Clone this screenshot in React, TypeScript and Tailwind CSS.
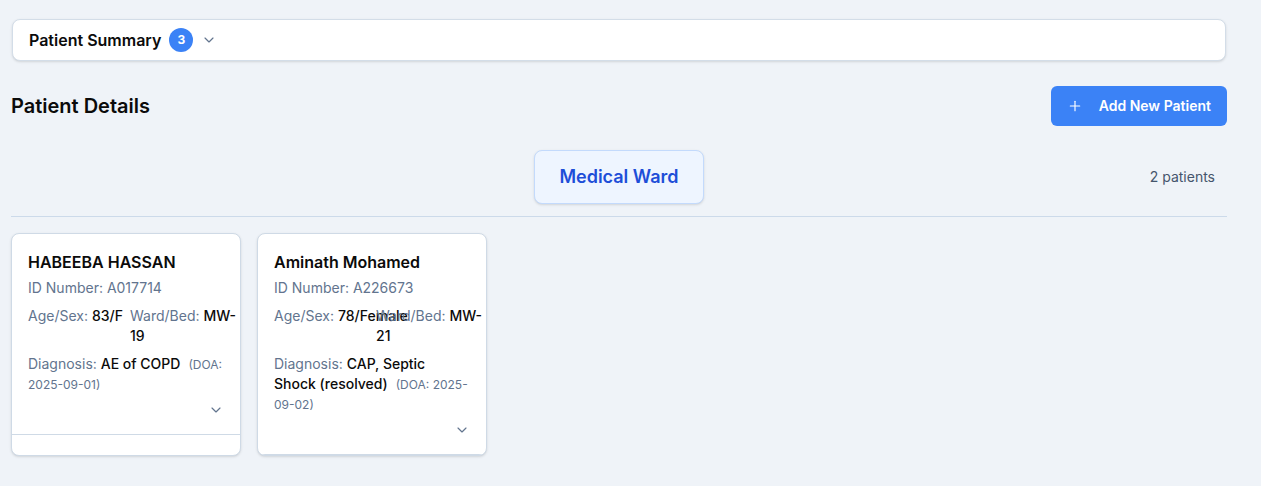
import React from "react";
import { ChevronDown, Plus } from "lucide-react";

type Patient = {
  name: string;
  id: string;
  ageSex: string;
  bedPrefix: string;
  bedNo: string;
  diagnosis: string;
  doa: string;
};

const patients: Patient[] = [
  {
    name: "HABEEBA HASSAN",
    id: "A017714",
    ageSex: "83/F",
    bedPrefix: "MW-",
    bedNo: "19",
    diagnosis: "AE of COPD",
    doa: "2025-09-01",
  },
  {
    name: "Aminath Mohamed",
    id: "A226673",
    ageSex: "78/Female",
    bedPrefix: "MW-",
    bedNo: "21",
    diagnosis: "CAP, Septic Shock (resolved)",
    doa: "2025-09-02",
  },
];

const PatientCard = ({ p }: { p: Patient }) => {
  return (
    <div className="flex w-[230px] flex-col overflow-hidden rounded-lg border border-[#cfdae6] bg-white shadow-sm">
      <div className="border-b border-[#cfdae6] px-4 pt-4 pb-4">
        <h3 className="text-base leading-6 font-semibold text-[#0b0b0b]">{p.name}</h3>
        <p className="mt-1 text-sm leading-5 text-slate-500">ID Number: {p.id}</p>
        <div className="mt-2 grid grid-cols-2 gap-2 text-sm leading-5">
          <p className="whitespace-nowrap text-slate-500">
            Age/Sex: <span className="font-medium text-[#0b0b0b]">{p.ageSex}</span>
          </p>
          <p className="text-slate-500">
            Ward/Bed:{"\u00a0"}
            <span className="font-medium text-[#0b0b0b]">
              {p.bedPrefix}
              <wbr />
              {p.bedNo}
            </span>
          </p>
        </div>
        <p className="mt-2 text-sm leading-5 text-slate-500">
          Diagnosis: <span className="font-medium text-[#0b0b0b]">{p.diagnosis}</span>
          <span className="ml-2 text-xs text-slate-500">(DOA: {p.doa})</span>
        </p>
        <div className="mt-2 flex justify-end">
          <ChevronDown size={16} strokeWidth={1.75} className="text-slate-500" />
        </div>
      </div>
    </div>
  );
};

export default function App() {
  return (
    <div
      className="flex min-h-[486px] w-full bg-[#eff3f8] text-[#0b0b0b]"
      style={{ fontFamily: "Inter, 'Noto Sans', 'Liberation Sans', sans-serif" }}
    >
      <div className="w-[1227px] pt-[19px] pl-[11px]">
        {/* summary bar */}
        <div className="mx-px flex h-[42px] items-center gap-2 rounded-lg border border-[#d3dde8] bg-white px-4 shadow-sm">
          <span className="text-base font-semibold text-[#0b0b0b]">Patient Summary</span>
          <span className="flex h-6 w-6 items-center justify-center rounded-full bg-[#3b82f6] text-xs font-bold text-white">
            3
          </span>
          <ChevronDown size={16} strokeWidth={1.75} className="text-slate-500" />
        </div>

        {/* header */}
        <div className="mt-[25px] flex items-center justify-between">
          <h2 className="text-xl font-semibold text-[#0b0b0b]">Patient Details</h2>
          <button className="flex h-10 items-center gap-4 rounded-md bg-[#3b82f6] px-4 text-sm font-semibold text-white">
            <Plus size={16} strokeWidth={1.75} />
            Add New Patient
          </button>
        </div>

        {/* ward tab */}
        <div className="mt-6 grid grid-cols-3 items-center border-b border-[#ccdaea] pb-3">
          <div />
          <div className="flex justify-center">
            <div className="rounded-lg border border-[#c3dafc] bg-[#eef5ff] px-6 py-3 text-lg leading-7 font-semibold text-[#1d4ed8] shadow-sm">
              Medical Ward
            </div>
          </div>
          <div className="pr-3 text-right text-sm text-slate-600">2 patients</div>
        </div>

        {/* cards */}
        <div className="mt-4 flex items-stretch gap-4">
          {patients.map((p) => (
            <PatientCard key={p.id} p={p} />
          ))}
        </div>
      </div>
    </div>
  );
}
